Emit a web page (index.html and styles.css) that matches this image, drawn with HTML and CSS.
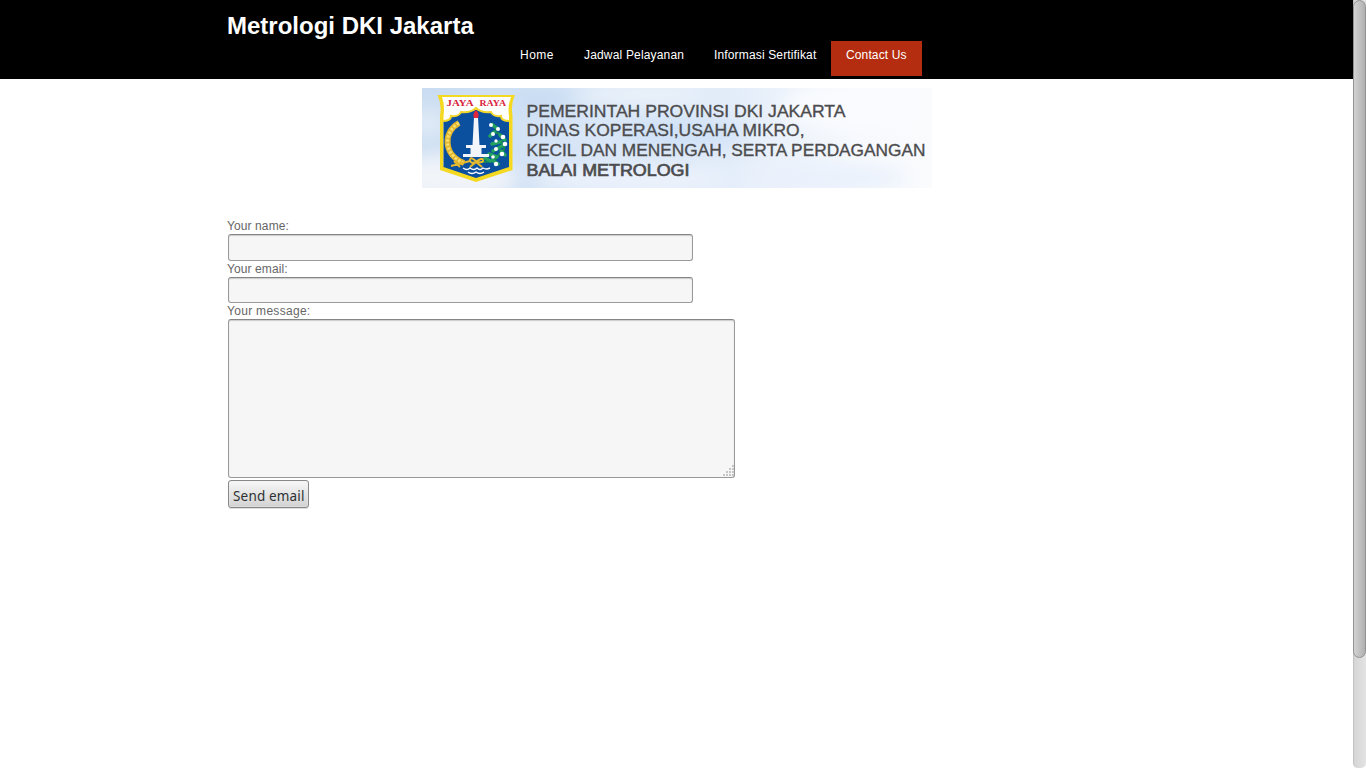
FILE: index.html
```html
<!DOCTYPE html>
<html lang="id">
<head>
<meta charset="utf-8">
<title>Metrologi DKI Jakarta</title>
<link rel="stylesheet" href="styles.css">
</head>
<body>
<div class="page">
  <header class="header">
    <div class="wrap">
      <h1 class="title">Metrologi DKI Jakarta</h1>
      <nav class="nav">
        <a class="home">Home</a><a class="jadwal">Jadwal Pelayanan</a><a class="info">Informasi Sertifikat</a><a class="contact active">Contact Us</a>
      </nav>
    </div>
  </header>
  <main class="wrap">
    <svg class="banner" width="510" height="100" viewBox="0 0 510 100">
      <defs>
        <linearGradient id="sky"><stop offset="0" stop-color="#c9dcf1"/><stop offset=".25" stop-color="#d5e4f6"/><stop offset=".6" stop-color="#e2ecf9"/><stop offset=".85" stop-color="#f6f9fd"/><stop offset="1" stop-color="#fafbfd"/></linearGradient>
        <filter id="soft" x="-50%" y="-100%" width="200%" height="300%"><feGaussianBlur stdDeviation="9"/></filter>
        <clipPath id="frame"><rect width="510" height="100"/></clipPath>
      </defs>
      <rect width="510" height="100" fill="url(#sky)"/>
      <g clip-path="url(#frame)"><g filter="url(#soft)">
        <ellipse cx="25" cy="90" rx="70" ry="24" fill="#f1f4f9"/>
        <ellipse cx="5" cy="35" rx="22" ry="16" fill="#dfeaf6"/>
        <ellipse cx="120" cy="12" rx="32" ry="9" fill="#c5daf1"/>
        <ellipse cx="220" cy="6" rx="65" ry="9" fill="#edf3fa"/>
        <ellipse cx="260" cy="45" rx="65" ry="14" fill="#cfe1f7"/>
        <ellipse cx="210" cy="92" rx="100" ry="12" fill="#edf3fc"/>
        <ellipse cx="430" cy="18" rx="70" ry="25" fill="#f9fbfe"/>
        <ellipse cx="400" cy="90" rx="85" ry="14" fill="#eaf1fc"/>
      </g></g>
      <path d="M15.500 7H93Q88.500 16 90.500 27V82L54 94L18 82V27Q20 16 15.500 7Z" fill="#f5d820"/>
      <path d="M20 9H89Q85.500 17 87 28V78H21.500V28Q23 17 20 9Z" fill="#fff"/>
      <path d="M21.500 79V33Q29 33 29 28Q37 29 39 24Q49 25 54 20Q59 25 69 24Q71 29 79 28Q79 33 87 33V79L54 90Z" fill="#0b4f9f"/>
      <path d="M20.500 33Q29 33 29 28Q37 29 39 24Q49 25 54 20Q59 25 69 24Q71 29 79 28Q79 33 87.500 33" fill="none" stroke="#f2d62b" stroke-width="2"/>
      <text x="24.500" y="18" textLength="27" lengthAdjust="spacingAndGlyphs" class="motto">JAYA</text>
      <text x="57.500" y="18" textLength="26.500" lengthAdjust="spacingAndGlyphs" class="motto">RAYA</text>
      <path d="M37 35C21 44 21 67 42 75" fill="none" stroke="#e3b52c" stroke-width="6"/>
      <path d="M37 35C21 44 21 67 42 75" fill="none" stroke="#f6de70" stroke-width="3" stroke-dasharray="2.500 1.600"/>
      <path d="M70 35Q76 40 73 44Q85 48 79 54Q86 62 77 66Q75 74 60 74" fill="none" stroke="#168b55" stroke-width="2"/>
      <path d="M70 37l5 3M72 44l-4 4M78 47l5 5M78 54l-8 2M80 58l-9 5M79 63l4 4M75 69l-8-3M70 72l6 4M68 73l-5-3" stroke="#23a160" stroke-width="3.500" stroke-linecap="round"/>
      <g fill="#fff"><circle cx="69" cy="37" r="2"/><circle cx="76" cy="41" r="2"/><circle cx="71" cy="46" r="2"/><circle cx="81" cy="49" r="2.300"/><circle cx="74" cy="53" r="1.700"/><circle cx="83" cy="56" r="2.300"/><circle cx="74" cy="61" r="2"/><circle cx="80" cy="66" r="2.300"/><circle cx="71" cy="69" r="1.800"/><circle cx="74" cy="76" r="2.200"/></g>
      <path d="M52 29H56L57.500 57H64V60H59.500V66H67V69H41V66H48.500V60H44V57H50.500Z" fill="#f4f5fa"/>
      <path d="M52 30Q50 26 54 22Q58 26 56 30Z" fill="#e2263c"/>
      <path d="M54 73Q48 68 48 72T54 74Q60 69 61 72T54 74L48 79M54 74L60 79M29 78L48 73M32 73L38 79" fill="none" stroke="#e5b92e" stroke-width="2"/>
      <path d="M41 80Q45 83 48 80Q52 83 55 80Q58 83 61 80Q64 82 68 80M46 84Q50 87 54 84Q58 87 62 84" fill="none" stroke="#fff" stroke-width="1.400"/>
      <g class="banner-text">
        <text x="104.500" y="29" textLength="319" lengthAdjust="spacingAndGlyphs">PEMERINTAH PROVINSI DKI JAKARTA</text>
        <text x="104.500" y="48" textLength="278" lengthAdjust="spacingAndGlyphs">DINAS KOPERASI,USAHA MIKRO,</text>
        <text x="104.500" y="68" textLength="399" lengthAdjust="spacingAndGlyphs">KECIL DAN MENENGAH, SERTA PERDAGANGAN</text>
        <text x="104.500" y="88" textLength="163" lengthAdjust="spacingAndGlyphs" class="office">BALAI METROLOGI</text>
      </g>
    </svg>
    <form class="form">
      <label class="label-name" for="name">Your name:</label>
      <input id="name" class="field field-name" type="text">
      <label class="label-email" for="email">Your email:</label>
      <input id="email" class="field field-email" type="text">
      <label for="message">Your message:</label>
      <div class="message-box">
        <textarea id="message" class="field message"></textarea>
        <svg class="grip" width="11" height="11" viewBox="0 0 11 11"><path d="M9 0h2v2H9zM9 3h2v2H9zM6 3h2v2H6zM9 6h2v2H9zM6 6h2v2H6zM3 6h2v2H3zM9 9h2v2H9zM6 9h2v2H6zM3 9h2v2H3zM0 9h2v2H0z" fill="#c5c5c5"/></svg>
      </div>
      <button class="send" type="button"><svg width="72" height="20"><text x="0" y="14" textLength="71.500">Send email</text></svg></button>
    </form>
  </main>
</div>
<div class="scrollbar"><div class="thumb"></div></div>
</body>
</html>
```

FILE: styles.css
```css
* { box-sizing: border-box; }
html, body { height: 100%; overflow: hidden; }
body {
  margin: 0;
  display: flex;
  background: #fff;
  color: #666;
  font: 12px/16px "Liberation Sans", Arial, sans-serif;
}
.page { flex: 1; }
.header { height: 79px; background: #000; }
.wrap { width: 900px; margin-left: 227px; }
.title {
  margin: 0;
  padding-top: 11px;
  height: 41px;
  color: #fff;
  font-size: 24px;
  line-height: 30px;
  font-weight: bold;
  white-space: nowrap;
}
.nav { display: flex; margin-left: 278px; }
.nav a {
  height: 35px;
  padding: 6px 0 0 15px;
  color: #fff;
  white-space: nowrap;
}
.home { width: 64px; letter-spacing: .5px; }
.jadwal { width: 130px; letter-spacing: .17px; }
.info { width: 132px; letter-spacing: .15px; }
.contact { width: 91px; letter-spacing: .13px; }
.nav .active { background: #b42d10; }
.banner { display: block; margin: 9px 0 0 195px; }
.banner-text {
  fill: #4c4c4e;
  stroke: #4c4c4e;
  stroke-width: .35px;
  font: 17px "Liberation Sans", Arial, sans-serif;
}
.office { stroke-width: .7px; }
.motto { fill: #d9233c; font: bold 9px "Liberation Serif", serif; }
.form {
  display: flex;
  flex-direction: column;
  align-items: flex-start;
  margin-top: 30px;
  letter-spacing: .3px;
}
.form label { height: 16px; }
.form .label-name, .form .label-email { letter-spacing: .1px; }
.field {
  display: block;
  margin: 0 0 0 1px;
  padding: 3px;
  border: 1px solid #999;
  border-top-color: #858585;
  border-radius: 3px;
  background: #f6f6f6;
  box-shadow: inset 0 1px 1px #ccc;
  outline: 0;
  resize: none;
}
.field-name { width: 465px; height: 27px; }
.field-email { width: 465px; height: 26px; }
.message-box { position: relative; }
.message { width: 507px; height: 159px; }
.grip { position: absolute; right: 1px; bottom: 2px; }
.send {
  width: 81px;
  height: 28px;
  margin: 2px 0 0 1px;
  padding: 5px 0 0;
  border: 1px solid #888;
  border-radius: 3px;
  background: linear-gradient(#f7f7f7, #d2d2d2);
  box-shadow: inset 0 0 0 1px #efefef55, 0 1px 0 #ddd;
}
.send svg { display: block; margin: 0 auto; }
.send text { fill: #2d3133; font: 13.500px "Noto Sans", sans-serif; }
.scrollbar {
  width: 13px;
  height: 768px;
  border-left: 1px solid #c2c2c2;
  border-radius: 0 0 5px 5px;
  background: linear-gradient(90deg, #d5d5d5, #e3e3e3);
}
.thumb {
  width: 13px;
  height: 658px;
  margin-left: -1px;
  border: 1px solid #929292;
  border-radius: 7px;
  background: linear-gradient(90deg, #d2d2d2, #b0b0b0);
}
```
